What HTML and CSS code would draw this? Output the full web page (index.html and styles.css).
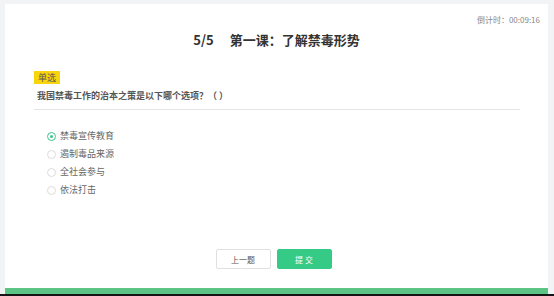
FILE: index.html
```html
<!DOCTYPE html>
<html lang="zh">
<head>
    <meta charset="UTF-8">
    <title>第一课：了解禁毒形势</title>
    <link rel="stylesheet" href="styles.css">
</head>
<body>
    <div class="page">
        <div class="card">
            <div class="timer">倒计时：00:09:16</div>
            <h1 class="title"><span class="num">5/5</span>第一课：了解禁毒形势</h1>

            <div class="question">
                <span class="tag">单选</span>
                <p class="stem">我国禁毒工作的治本之策是以下哪个选项？（ ）</p>
            </div>

            <ul class="options">
                <li class="option checked"><span class="radio"></span>禁毒宣传教育</li>
                <li class="option"><span class="radio"></span>遏制毒品来源</li>
                <li class="option"><span class="radio"></span>全社会参与</li>
                <li class="option"><span class="radio"></span>依法打击</li>
            </ul>

            <div class="actions">
                <button class="btn btn-prev">上一题</button>
                <button class="btn btn-submit">提 交</button>
            </div>

            <div class="bar"></div>
        </div>
    </div>
    <div class="bottom-line"></div>
</body>
</html>
```

FILE: styles.css
```css
* {
    margin: 0;
    padding: 0;
    box-sizing: border-box;
    font-family: "Microsoft YaHei", "Noto Sans CJK SC", "Noto Sans", sans-serif;
}

html, body {
    height: 100%;
}

body {
    background: #f2f3f5;
    display: flex;
    flex-direction: column;
    overflow: hidden;
}

.page {
    flex: 1;
    padding: 4px 6px 0 5px;
    display: flex;
}

.card {
    flex: 1;
    background: #fff;
    display: flex;
    flex-direction: column;
}

.timer {
    align-self: flex-end;
    margin: 10px 8px 0 0;
    font-size: 8px;
    color: #888;
    line-height: 12px;
}

.title {
    text-align: center;
    font-size: 13px;
    font-weight: bold;
    color: #333;
    line-height: 18px;
    margin-top: 5px;
}

.num {
    margin-right: 16px;
}

.question {
    margin: 13px 28px 0 29px;
    border-bottom: 1px solid #e4e4e4;
    padding-bottom: 6px;
}

.tag {
    display: inline-block;
    background: #f7d40c;
    color: #555;
    font-size: 9px;
    line-height: 13px;
    padding: 0 4px;
}

.stem {
    font-size: 9px;
    font-weight: bold;
    color: #555;
    line-height: 14px;
    margin-top: 3px;
    padding-left: 3px;
}

.options {
    list-style: none;
    margin: 17px 0 0 42px;
}

.option {
    display: flex;
    align-items: center;
    gap: 4px;
    font-size: 9px;
    color: #666;
    line-height: 18px;
}

.radio {
    width: 9px;
    height: 9px;
    border: 1px solid #dcdcdc;
    border-radius: 50%;
    display: flex;
    align-items: center;
    justify-content: center;
}

.checked .radio {
    border-color: #3cc68a;
}

.checked .radio::after {
    content: "";
    width: 3px;
    height: 3px;
    border-radius: 50%;
    background: #3cc68a;
}

.actions {
    display: flex;
    justify-content: center;
    gap: 6px;
    margin: auto 6px 19px 0;
}

.btn {
    width: 55px;
    height: 20px;
    font-size: 8px;
    border-radius: 2px;
    cursor: pointer;
}

.btn-prev {
    background: #fff;
    border: 1px solid #e0e0e0;
    color: #555;
}

.btn-submit {
    background: #35cb86;
    border: 1px solid #35cb86;
    color: #fff;
}

.bar {
    height: 6px;
    background: #5cc585;
}

.bottom-line {
    height: 2px;
    background: #151515;
}
```
